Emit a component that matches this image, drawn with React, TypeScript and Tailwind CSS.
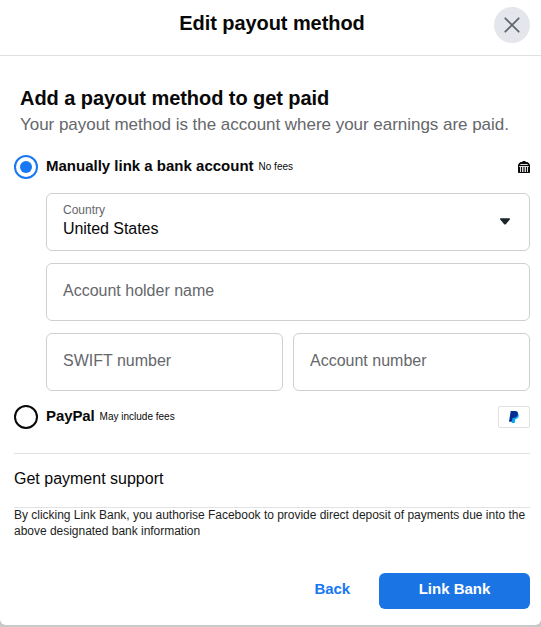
import React from "react";

function Field({ label }: { label: string }) {
  return (
    <div className="flex h-[58px] min-w-0 flex-1 items-center rounded-md border border-[#ced0d4] px-4">
      <span className="-mt-0.5 text-base leading-5 text-[#65676b]">{label}</span>
    </div>
  );
}

function BankIcon() {
  return (
    <svg width="12" height="12" viewBox="0 0 12 12" className="block">
      <path d="M5 0h2l1 1h1.5L11 2.3 12 4v7.2q0 .8-.8.8H.8q-.8 0-.8-.8V4l1-1.7L2.5 1H4Z" fill="#0b0b0b" />
      <path d="M2.3 3.5h7.4M1.2 5.5h9.6M2.5 6v5M4.5 6v5M7.5 6v5M9.5 6v5" stroke="#dedede" strokeWidth="1" />
      <path d="M6 6v5" stroke="#888888" strokeWidth="1.4" />
    </svg>
  );
}

function PayPalIcon() {
  return (
    <svg width="10" height="12" viewBox="0 0 10 12" className="block">
      <path d="M3.5 2.5H9Q10.3 4 9.3 6.3 8.5 8 6.3 8.2L5.7 12H2.7Z" fill="#0aa5ef" />
      <path d="M1.7 0H6Q9.4 0 8.9 3.1 8.4 6.9 4.4 6.9H3.5L2.8 10.8H0Z" fill="#062f91" />
    </svg>
  );
}

export default function App() {
  return (
    <div className="h-[627px] w-[541px] overflow-hidden bg-[#c9c9c9] font-['Liberation_Sans',Arial,sans-serif] text-[#080809]">
      <div className="flex h-[625px] flex-col rounded-b-md bg-white">
        <header className="grid h-14 shrink-0 grid-cols-[1fr_auto_1fr] items-center border-b border-[#dfe0e2] pr-[11px] pb-[6px] pl-[14px]">
          <h1 className="col-start-2 -mt-[3px] text-xl leading-6 font-bold tracking-[-0.07px]">Edit payout method</h1>
          <button className="mt-px flex size-9 items-center justify-center justify-self-end rounded-full bg-[#e4e6eb]" aria-label="Close">
            <svg width="16" height="16" viewBox="0 0 16 16" fill="none" stroke="#606770" strokeWidth="1.8" strokeLinecap="round">
              <path d="m1.3 1.3 13.4 13.4m0-13.4L1.3 14.7" />
            </svg>
          </button>
        </header>

        <main className="flex flex-1 flex-col pr-[11px] pl-[14px]">
          <div className="h-[93px] pt-[30px] pl-[6px]">
            <h2 className="text-xl leading-6 font-bold tracking-[-0.06px]">Add a payout method to get paid</h2>
            <p className="mt-[3px] text-[17px] leading-6 tracking-[-0.03px] whitespace-nowrap text-[#65676b]">Your payout method is the account where your earnings are paid.</p>
          </div>

          <div className="mt-[6px] flex h-6 items-center">
            <span className="flex size-6 items-center justify-center rounded-full border-2 border-[#1877f2]">
              <span className="size-3 rounded-full bg-[#1877f2]" />
            </span>
            <span className="-mt-0.5 ml-2 text-[15px] leading-5 font-bold">Manually link a bank account</span>
            <span className="ml-[5px] text-[10px] leading-4">No fees</span>
            <span className="ml-auto"><BankIcon /></span>
          </div>

          <div className="mt-[14px] ml-8 flex flex-col gap-3">
            <div className="flex h-[58px] items-center justify-between rounded-md border border-[#ced0d4] px-4">
              <div className="-mt-[3px]">
                <div className="text-xs leading-4 text-[#65676b]">Country</div>
                <div className="mt-px text-base leading-5 tracking-[-0.05px]">United States</div>
              </div>
              <svg width="10" height="7" viewBox="0 0 10 7" className="mr-[3px] -mt-0.5">
                <path d="M.7.2h8.6q1 .1.5 1.2L6 6Q5 7.1 4 6L.2 1.4Q-.3.3.7.2Z" fill="#1c2529" />
              </svg>
            </div>
            <div className="flex"><Field label="Account holder name" /></div>
            <div className="flex gap-[10px]">
              <Field label="SWIFT number" />
              <Field label="Account number" />
            </div>
          </div>

          <div className="mt-[14px] flex h-6 items-center">
            <span className="size-6 rounded-full border-2 border-[#080809]" />
            <span className="-mt-0.5 ml-2 text-[15px] leading-5 font-bold tracking-[-0.1px]">PayPal</span>
            <span className="ml-[5px] text-[10px] leading-4">May include fees</span>
            <span className="ml-auto flex h-[22px] w-8 items-center justify-center rounded-xs border border-[#dfe1e5]">
              <PayPalIcon />
            </span>
          </div>

          <div className="mt-6 flex h-[55px] items-center border-y border-[#e1e2e4] pb-1 text-base">Get payment support</div>
          <p className="-mt-px text-xs leading-4 tracking-[-0.02px] whitespace-nowrap text-[#1c1e21]">
            By clicking Link Bank, you authorise Facebook to provide direct deposit of payments due into the
            <br />
            above designated bank information
          </p>

          <div className="mt-auto mb-4 flex h-9 justify-end text-[15px] font-bold">
            <button className="mr-[29px] pb-1 tracking-[-0.1px] text-[#1877f2]">Back</button>
            <button className="w-[151px] rounded-md bg-[#1b74e4] pb-1 text-white">Link Bank</button>
          </div>
        </main>
      </div>
    </div>
  );
}
